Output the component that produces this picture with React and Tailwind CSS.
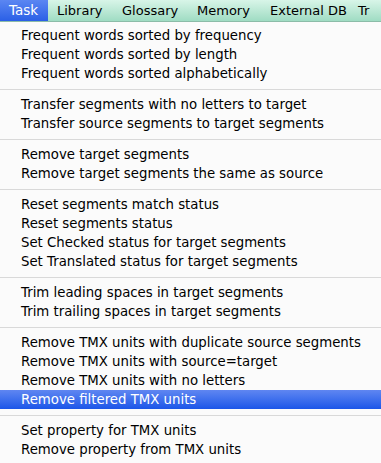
const groups = [
  ["Frequent words sorted by frequency", "Frequent words sorted by length", "Frequent words sorted alphabetically"],
  ["Transfer segments with no letters to target", "Transfer source segments to target segments"],
  ["Remove target segments", "Remove target segments the same as source"],
  ["Reset segments match status", "Reset segments status", "Set Checked status for target segments", "Set Translated status for target segments"],
  ["Trim leading spaces in target segments", "Trim trailing spaces in target segments"],
  ["Remove TMX units with duplicate source segments", "Remove TMX units with source=target", "Remove TMX units with no letters", "Remove filtered TMX units"],
  ["Set property for TMX units", "Remove property from TMX units"],
];

export default function App() {
  return (
    <div className="w-[381px] h-[463px] overflow-hidden bg-[#fbfbfb] text-black" style={{ fontFamily: '"DejaVu Sans", "Liberation Sans", sans-serif' }}>
      <div className="flex h-[22px] bg-gradient-to-b from-[#d8f5e8] to-[#9fdcc3] border-b border-[#8cbca8] text-[13px] leading-[21px] whitespace-nowrap">
        <div className="w-[48px] pl-[9px] text-[13.5px] text-white bg-gradient-to-b from-[#5b86f2] to-[#2a5fe6]">Task</div>
        <span className="ml-[9px] w-[65px]">Library</span>
        <span className="w-[75px]">Glossary</span>
        <span className="w-[73px]">Memory</span>
        <span className="w-[88px]">External DB</span>
        <span>Tr</span>
      </div>
      <div className="pt-[4px]">
        {groups.map((g, gi) => (
          <div key={gi}>
            {gi > 0 && <div className="h-[12px] flex items-center"><div className="w-full h-px bg-[#d9d9d9]" /></div>}
            {g.map((item) => {
              const on = item === "Remove filtered TMX units";
              return (
                <div
                  key={item}
                  className={"h-[19px] pl-[21px] text-[13.3px] leading-[19px] whitespace-nowrap " + (on ? "text-white bg-gradient-to-b from-[#5f86f1] to-[#1a55e8]" : "")}
                >
                  {item}
                </div>
              );
            })}
          </div>
        ))}
      </div>
    </div>
  );
}
